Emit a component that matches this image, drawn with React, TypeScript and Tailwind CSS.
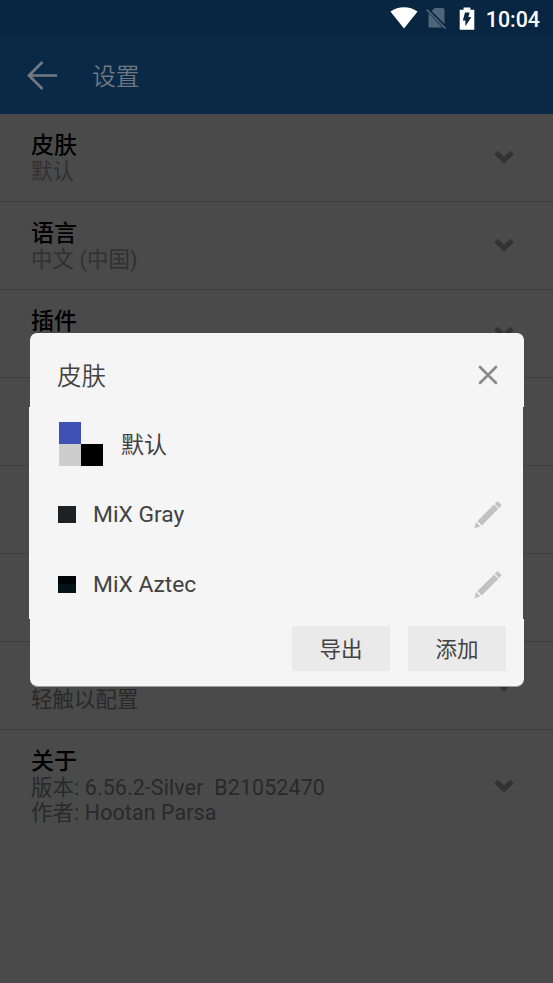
import React from 'react';

interface SettingRow {
    title: string;
    lines: string[];
    tone?: string;
}

const rows: SettingRow[] = [
    { title: '皮肤', lines: ['默认'], tone: 'text-[#303030]' },
    { title: '语言', lines: ['中文 (中国)'], tone: 'text-[#303030]' },
    { title: '插件', lines: [] },
    { title: '', lines: [] },
    { title: '', lines: [] },
    { title: '', lines: [] },
    { title: '', lines: ['轻触以配置'] },
    { title: '关于', lines: ['版本: 6.56.2-Silver\u00a0 B21052470', '作者: Hootan Parsa'] },
];

const skins = [
    { name: 'MiX Gray', swatch: 'bg-[#1f2022]' },
    { name: 'MiX Aztec', swatch: 'bg-linear-to-b from-[#000405] from-50% to-[#041316] to-50%' },
];

const ChevronIcon = () => (
    <svg width="20" height="14" viewBox="0 0 20 14" className="mb-0.5 shrink-0">
        <path d="M2 2.6 10 10 18 2.6" fill="none" stroke="#323232" strokeWidth="5" />
    </svg>
);

const PencilIcon = () => (
    <svg width="28" height="28" viewBox="0 0 28 28" fill="#c2c2c2">
        <path d="M0.5 27.2 2 21.1 6.2 25.5Z" />
        <path d="M3.4 20.1 20 3.4 24.4 7.8 7.8 24.4Z" />
        <path d="M20.8 2.7 23.6 0.2 27.8 4.2 25.1 7Z" />
    </svg>
);

const StatusBar = () => (
    <div className="flex h-[38px] items-center justify-end bg-[#082641] pr-[13px] pb-0.5 text-white">
        <svg width="28" height="22" viewBox="0 0 28 22" className="mr-[8px]">
            <path d="M0.4 4.6C8.4-1.1 19.6-1.1 27.6 4.6L14 21.6Z" fill="#fff" />
        </svg>
        <svg width="22" height="22" viewBox="0 0 22 22" className="mr-[11px]">
            <path d="M8.5 1H16.5Q18.5 1 18.5 3V17L5.6 4Z" fill="#4f6579" />
            <path d="M2.5 6.2 16.3 20.5H2.5Z" fill="#4f6579" />
            <path d="M0.8 2.6 19.6 21.5" stroke="#4f6579" strokeWidth="1.7" />
        </svg>
        <svg width="16" height="23" viewBox="0 0 16 23" className="mr-[11px]">
            <path d="M4.6 0.5H11.4V2.7H15.3V22.8H0.7V2.7H4.6Z" fill="#fff" />
            <path d="M6 5.6H10.6L9.4 10H12.4L6.4 19.2V13.4H3.8Z" fill="#082641" />
        </svg>
        <span className="mt-[3px] text-[21.4px] leading-none font-medium">10:04</span>
    </div>
);

const Toolbar = () => (
    <div className="flex h-[76px] items-center pl-[27px] text-[#707780]">
        <svg width="31" height="31" viewBox="0 0 31 31" className="mr-[34px] mb-0.5">
            <path d="M15.5 2 2 15.5 15.5 29M2 15.5H30" fill="none" stroke="#727980" strokeWidth="2.7" />
        </svg>
        <h1 className="mt-[3px] text-[23.8px] leading-none font-[350]">设置</h1>
    </div>
);

const Row: React.FC<{ row: SettingRow; last: boolean }> = ({ row, last }) => (
    <div
        className={`flex items-center justify-between pr-[39px] pl-[31px] ${
            last ? 'h-[113px]' : 'h-[88px] border-b border-[#3e3e3e]'
        }`}
    >
        <div>
            <div className="h-[27px] text-[23px] leading-[27px] font-medium text-black">{row.title}</div>
            <div className={`min-h-[25px] text-[21.4px] leading-[25px] tracking-[0.12px] ${row.tone ?? 'text-[#292929]'}`}>
                {row.lines.map((line) => (
                    <div key={line}>{line}</div>
                ))}
            </div>
        </div>
        <ChevronIcon />
    </div>
);

const SkinDialog = () => (
    <div className="absolute top-[333px] left-[30px] w-[494px] text-[#424242]">
        <div className="flex h-[74px] items-center justify-between rounded-t-[7px] bg-[#f5f5f5] pt-[10px] pr-[26px] pl-[27px]">
            <h2 className="mt-1 text-[24.5px] leading-none font-[350]">皮肤</h2>
            <svg width="20" height="20" viewBox="0 0 20 20">
                <path d="M2 2 18 18M18 2 2 18" stroke="#8a8a8a" strokeWidth="2.7" strokeLinecap="round" />
            </svg>
        </div>

        <div className="mr-px -ml-px h-[212px] bg-[#f5f5f5] pt-px pr-[21px] pl-[29px]">
            <div className="flex h-[72px] items-center">
                <div className="mr-[18px] ml-px grid size-11 grid-cols-2">
                    <span className="bg-[#3f51b5]" />
                    <span />
                    <span className="bg-[#cdcdcd]" />
                    <span className="bg-black" />
                </div>
                <span className="mt-0.5 text-[23px] leading-none">默认</span>
            </div>
            {skins.map((skin) => (
                <div key={skin.name} className="flex h-[70px] items-center">
                    <span className={`mr-[17px] mb-px h-[17px] w-[18px] ${skin.swatch}`} />
                    <span className="grow text-[22.8px] leading-none">{skin.name}</span>
                    <PencilIcon />
                </div>
            ))}
        </div>

        <div className="flex h-[68px] items-start justify-end gap-[18px] rounded-b-[8px] border-b border-[#9c9c9c] bg-[#f5f5f5] pt-[7px] pr-[18px]">
            <button className="h-[45px] w-[98px] bg-[#eaeaea] pt-1 text-[21.5px]">导出</button>
            <button className="h-[45px] w-[98px] bg-[#eaeaea] pt-1 text-[21.5px]">添加</button>
        </div>
    </div>
);

export default function App() {
    return (
        <div className="relative h-[983px] w-[553px] overflow-hidden bg-[#4a4a4a] font-[Roboto,'Noto_Sans_CJK_SC',sans-serif]">
            <header className="bg-[#0a2946]">
                <StatusBar />
                <Toolbar />
            </header>
            <main>
                {rows.map((row, i) => (
                    <Row key={i} row={row} last={i === rows.length - 1} />
                ))}
            </main>
            <SkinDialog />
        </div>
    );
}
